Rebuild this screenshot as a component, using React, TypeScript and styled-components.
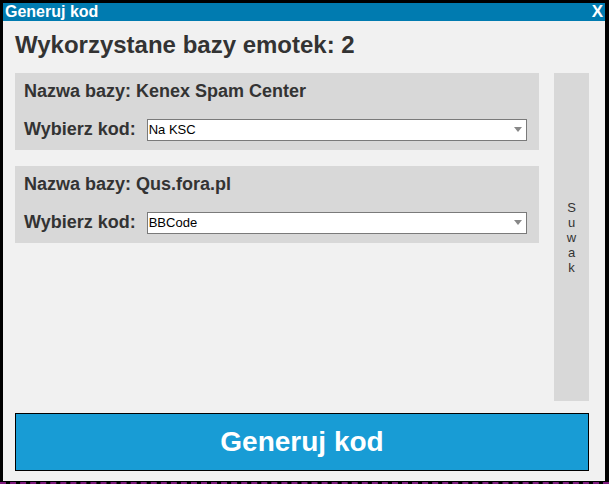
import React, { FC } from "react";
import styled, { createGlobalStyle } from "styled-components";

const GlobalStyle = createGlobalStyle`
  html, body {
    margin: 0;
    padding: 0;
    background: #ffffff;
  }
  body {
    font-family: "Liberation Sans", Arial, sans-serif;
  }
`;

// outer frame, the purple dashed line sits under the black border
const Frame = styled.div`
  width: 609px;
  height: 484px;
  box-sizing: border-box;
  background: #000;
  border-bottom: 2px dashed #7d1a7d;
`;

const Window = styled.div`
  height: 482px;
  box-sizing: border-box;
  border-style: solid;
  border-color: #000;
  border-width: 3px 4px 1px 3px;
  display: flex;
  flex-direction: column;
  background: #f1f1f1;
`;

const TitleBar = styled.div`
  height: 18px;
  background: #007bb0;
  color: #fff;
  display: flex;
  align-items: center;
  justify-content: space-between;
  padding: 0 2px 0 2px;
  font-weight: bold;
  font-size: 16px;
  line-height: 18px;
`;

const CloseMark = styled.span`
  font-size: 17px;
  cursor: pointer;
`;

const Body = styled.div`
  flex: 1;
  display: flex;
  flex-direction: column;
  padding: 10px 16px 10px 12px;
  min-height: 0;
`;

const Heading = styled.h1`
  margin: 0 0 15px 0;
  font-size: 24px;
  line-height: 27px;
  font-weight: bold;
  color: #333;
`;

const MainRow = styled.div`
  flex: 1;
  display: flex;
  gap: 15px;
  min-height: 0;
`;

const BaseList = styled.div`
  flex: 1;
  display: flex;
  flex-direction: column;
  gap: 16px;
`;

const BasePanel = styled.div`
  background: #d8d8d8;
  padding: 8px 12px 10px 9px;
  display: flex;
  flex-direction: column;
  gap: 16px;
`;

const BaseName = styled.div`
  font-size: 18px;
  line-height: 21px;
  font-weight: bold;
  color: #333;
`;

const CodeRow = styled.label`
  display: flex;
  align-items: center;
  gap: 11px;
  font-size: 18px;
  line-height: 21px;
  font-weight: bold;
  color: #333;
`;

const SelectWrap = styled.div`
  position: relative;
  flex: 1;
  height: 22px;
`;

const Select = styled.select`
  appearance: none;
  -webkit-appearance: none;
  width: 100%;
  height: 22px;
  box-sizing: border-box;
  border: 1px solid #7a7a7a;
  border-radius: 0;
  background: #fff;
  padding: 0 20px 0 1px;
  font-family: "Liberation Sans", Arial, sans-serif;
  font-size: 13px;
  color: #000;
  outline: none;
`;

const Arrow = styled.span`
  position: absolute;
  right: 5px;
  top: 9px;
  width: 0;
  height: 0;
  border-left: 4px solid transparent;
  border-right: 4px solid transparent;
  border-top: 5px solid #888;
  pointer-events: none;
`;

const Slider = styled.div`
  width: 35px;
  background: #d8d8d8;
  display: flex;
  align-items: center;
  justify-content: center;
`;

const SliderText = styled.div`
  display: flex;
  flex-direction: column;
  align-items: center;
  font-size: 13px;
  line-height: 15px;
  color: #333;
`;

const GenerateButton = styled.button`
  margin-top: 12px;
  height: 58px;
  box-sizing: border-box;
  border: 1px solid #000;
  background: #189cd5;
  color: #fff;
  font-family: "Liberation Sans", Arial, sans-serif;
  font-weight: bold;
  font-size: 28px;
  cursor: pointer;
`;

type Base = { name: string; code: string; options: string[] };

const bases: Base[] = [
  { name: "Kenex Spam Center", code: "Na KSC", options: ["Na KSC", "BBCode", "HTML"] },
  { name: "Qus.fora.pl", code: "BBCode", options: ["BBCode", "Na KSC", "HTML"] },
];

const BaseCard: FC<{ base: Base }> = ({ base }) => (
  <BasePanel>
    <BaseName>Nazwa bazy: {base.name}</BaseName>
    <CodeRow>
      Wybierz kod:
      <SelectWrap>
        <Select defaultValue={base.code}>
          {base.options.map((o) => (
            <option key={o} value={o}>{o}</option>
          ))}
        </Select>
        <Arrow />
      </SelectWrap>
    </CodeRow>
  </BasePanel>
);

const App: FC = () => {
  return (
    <>
      <GlobalStyle />
      <Frame>
        <Window>
          <TitleBar>
            <span>Generuj kod</span>
            <CloseMark>X</CloseMark>
          </TitleBar>
          <Body>
            <Heading>Wykorzystane bazy emotek: {bases.length}</Heading>
            <MainRow>
              <BaseList>
                {bases.map((b) => (
                  <BaseCard key={b.name} base={b} />
                ))}
              </BaseList>
              <Slider>
                <SliderText>
                  {"Suwak".split("").map((c, i) => (
                    <span key={i}>{c}</span>
                  ))}
                </SliderText>
              </Slider>
            </MainRow>
            <GenerateButton>Generuj kod</GenerateButton>
          </Body>
        </Window>
      </Frame>
    </>
  );
};

export default App;
